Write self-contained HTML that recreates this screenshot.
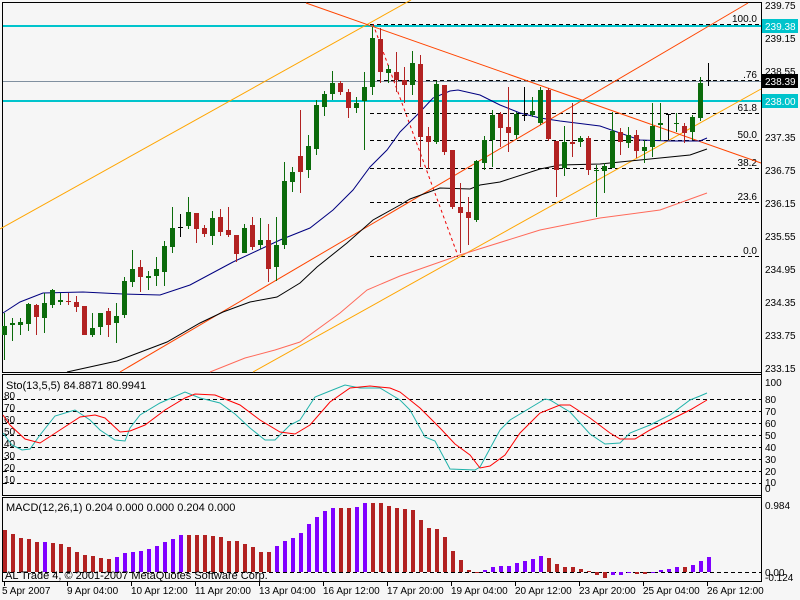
<!DOCTYPE html>
<html><head><meta charset="utf-8"><style>
html,body{margin:0;padding:0;background:#f6f6f6;width:800px;height:600px;overflow:hidden}
svg{display:block;font-family:"Liberation Sans",sans-serif;font-size:11px}
</style></head><body>
<svg id="s" width="800" height="600" viewBox="0 0 800 600" xmlns="http://www.w3.org/2000/svg">
<rect width="800" height="600" fill="#f6f6f6"/>
<rect x="2.5" y="2.5" width="759" height="370" fill="none" stroke="#000"/>
<rect x="2.5" y="374.5" width="759" height="121" fill="none" stroke="#000"/>
<rect x="2.5" y="497.5" width="759" height="84" fill="none" stroke="#000"/>
<line x1="3" y1="26" x2="761" y2="26" stroke="#00c4cc" stroke-width="2"/>
<line x1="3" y1="101" x2="761" y2="101" stroke="#00c4cc" stroke-width="2"/>
<line x1="3" y1="81.5" x2="761" y2="81.5" stroke="#8090a0"/>
<g stroke="#000" stroke-dasharray="4,3">
<line x1="370" y1="24.5" x2="761" y2="24.5"/><line x1="370" y1="80.5" x2="761" y2="80.5"/>
<line x1="370" y1="113.5" x2="761" y2="113.5"/><line x1="370" y1="140.5" x2="761" y2="140.5"/>
<line x1="370" y1="168.5" x2="761" y2="168.5"/><line x1="370" y1="202.5" x2="761" y2="202.5"/>
<line x1="370" y1="256.5" x2="761" y2="256.5"/>
</g>
<line x1="373" y1="24" x2="458" y2="256" stroke="#e00" stroke-dasharray="3,3"/>
<g font-size="10" text-anchor="end" fill="#000">
<text x="757" y="22">100.0</text><text x="757" y="78">.76</text><text x="757" y="111">61.8</text>
<text x="757" y="138">50.0</text><text x="757" y="166">38.2</text><text x="757" y="200">23.6</text><text x="757" y="254">0.0</text>
</g>
<g fill="none">
<line x1="0" y1="229" x2="411" y2="0" stroke="#ffa500"/>
<line x1="253" y1="372" x2="761" y2="89" stroke="#ffa500"/>
<line x1="120" y1="372" x2="748" y2="3" stroke="#ff4500"/>
<line x1="306" y1="3" x2="761" y2="163" stroke="#ff4500"/>
<polyline stroke="#000080" points="3,313 20,302 43,293 83,292 123,294 160,295 190,285 233,262 280,240 310,228 333,210 353,190 370,167 387,150 400,132 420,112 433,98 450,91 458,90 480,95 500,105 520,113 540,118 560,121 600,126 620,133 640,140 670,141 700,141 707,138"/>
<polyline stroke="#000" points="67,372 117,361 167,342 200,323 223,312 250,302 277,297 300,283 317,267 347,243 373,220 400,205 410,199 440,188 470,189 480,185 500,182 540,169 560,165 600,164 620,162 650,159 690,155 707,149"/>
<polyline stroke="#ff6a5a" points="210,372 245,358 275,350 300,342 340,313 367,290 400,276 420,269 460,255 540,230 600,218 660,210 707,193"/>
</g>
<g id="candles"></g>
<text x="6" y="389" fill="#000">Sto(13,5,5) 84.8871 80.9941</text>
<g stroke="#000" stroke-dasharray="4,3">
<line x1="3" y1="399.5" x2="761" y2="399.5"/><line x1="3" y1="411.5" x2="761" y2="411.5"/>
<line x1="3" y1="423.5" x2="761" y2="423.5"/><line x1="3" y1="435.5" x2="761" y2="435.5"/>
<line x1="3" y1="447.5" x2="761" y2="447.5"/><line x1="3" y1="459.5" x2="761" y2="459.5"/>
<line x1="3" y1="471.5" x2="761" y2="471.5"/><line x1="3" y1="483.5" x2="761" y2="483.5"/>
</g>
<g font-size="10" fill="#000">
<text x="4" y="399">80</text><text x="4" y="411">70</text><text x="4" y="423">60</text><text x="4" y="435">50</text>
<text x="4" y="447">40</text><text x="4" y="459">30</text><text x="4" y="471">20</text><text x="4" y="483">10</text>
</g>
<polyline fill="none" stroke="#20b2aa" points="3,433 12,445 22,450 30,449 40,435 55,416 75,410 90,420 100,430 115,440 125,441 130,428 140,415 160,403 185,392 200,398 220,403 235,414 250,428 265,440 275,440 290,425 300,420 315,397 330,391 345,385 360,388 380,388 400,400 410,410 425,437 435,441 450,469 475,470 480,467 500,430 510,420 530,408 545,399 550,400 570,412 590,434 605,444 620,443 630,433 650,425 670,415 690,400 700,396 707,393"/>
<polyline fill="none" stroke="#f00" points="3,415 10,425 25,439 40,443 60,430 80,417 95,415 105,418 120,432 130,431 145,425 165,410 185,398 195,394 215,395 240,405 260,420 280,432 295,434 310,425 330,402 350,388 370,386 390,388 400,392 420,408 440,428 455,444 470,455 480,468 490,466 505,455 520,433 540,413 560,405 570,405 590,418 610,433 620,439 635,439 650,430 670,420 690,410 707,400"/>
<text x="6" y="511" fill="#000">MACD(12,26,1) 0.204 0.000 0.000 0.204 0.000</text>
<line x1="3" y1="572.5" x2="761" y2="572.5" stroke="#000" stroke-dasharray="4,3"/>
<g id="bars"></g>
<text x="5" y="579" fill="#000">AL Trade 4, © 2001-2007 MetaQuotes Software Corp.</text>
<line x1="761.5" y1="2" x2="761.5" y2="582" stroke="#000"/>
<g font-size="10" fill="#000">
<text x="765" y="9">239.75</text><text x="765" y="42">239.15</text><text x="765" y="75">238.55</text>
<text x="765" y="141">237.35</text><text x="765" y="174">236.75</text><text x="765" y="207">236.15</text>
<text x="765" y="240">235.55</text><text x="765" y="273">234.95</text><text x="765" y="306">234.35</text>
<text x="765" y="339">233.75</text><text x="765" y="372">233.15</text>
</g>
<g font-size="10">
<rect x="762" y="19" width="36" height="14" fill="#00c4cc"/><text x="765" y="30" fill="#fff">239.38</text>
<rect x="762" y="74" width="36" height="14" fill="#000"/><text x="765" y="85" fill="#fff">238.39</text>
<rect x="762" y="94" width="36" height="14" fill="#00c4cc"/><text x="765" y="105" fill="#fff">238.00</text>
</g>
<g font-size="10" fill="#000">
<text x="765" y="386">100</text><text x="765" y="403">80</text><text x="765" y="415">70</text><text x="765" y="427">60</text>
<text x="765" y="439">50</text><text x="765" y="451">40</text><text x="765" y="463">30</text><text x="765" y="475">20</text>
<text x="765" y="486">10</text><text x="765" y="492">0</text>
<text x="765" y="509">0.984</text><text x="765" y="576">0.00</text><text x="765" y="581">-0.124</text>
</g>
<g id="ticks" stroke="#000"></g>
<g font-size="10" fill="#000">
<text x="2" y="594">5 Apr 2007</text><text x="67" y="594">9 Apr 04:00</text><text x="131" y="594">10 Apr 12:00</text>
<text x="195" y="594">11 Apr 20:00</text><text x="259" y="594">13 Apr 04:00</text><text x="323" y="594">16 Apr 12:00</text>
<text x="387" y="594">17 Apr 20:00</text><text x="451" y="594">19 Apr 04:00</text><text x="515" y="594">20 Apr 12:00</text>
<text x="579" y="594">23 Apr 20:00</text><text x="643" y="594">25 Apr 04:00</text><text x="707" y="594">26 Apr 12:00</text>
</g>
</svg>
<script>
var NS="http://www.w3.org/2000/svg";
function el(p,t,a){var e=document.createElementNS(NS,t);for(var k in a)e.setAttribute(k,a[k]);p.appendChild(e);return e;}
var C=[[326,335,313,360,'g'],[323,325,318,341,'g'],[322,325,318,335,'g'],[304,324,303,331,'g'],[305,317,304,335,'r'],[303,318,293,333,'g'],[290,305,289,308,'g'],[300,302,293,305,'g'],[301,302,293,305,'r'],[302,307,296,312,'r'],
[306,335,306,335,'r'],[328,335,313,337,'g'],[313,327,313,335,'g'],[311,325,308,337,'r'],[316,323,303,343,'g'],[281,315,277,318,'g'],[269,282,250,287,'g'],[267,277,260,292,'r'],[276,278,271,290,'g'],[269,276,257,286,'g'],
[246,272,241,286,'g'],[228,247,207,253,'g'],[227,228,214,237,'k'],[212,226,197,229,'g'],[213,229,213,243,'r'],[228,234,225,237,'r'],[218,236,211,245,'g'],[217,232,209,236,'r'],[230,235,207,237,'r'],[235,254,235,262,'r'],
[228,253,224,253,'g'],[225,247,217,250,'r'],[240,245,218,249,'g'],[240,269,224,282,'r'],[245,267,217,281,'g'],[181,245,162,249,'g'],[172,182,167,192,'g'],[156,172,110,193,'r'],[146,170,135,178,'g'],[105,149,100,155,'g'],
[94,107,91,116,'g'],[83,94,71,100,'g'],[83,92,81,95,'r'],[92,108,89,118,'r'],[103,108,97,113,'g'],[87,101,72,150,'g'],[38,87,27,95,'g'],[39,72,28,83,'r'],[69,73,65,83,'g'],[72,80,52,92,'r'],
[80,85,67,103,'r'],[63,85,51,95,'g'],[64,137,55,167,'r'],[136,142,127,169,'r'],[84,142,81,144,'g'],[85,152,85,155,'r'],[150,207,150,209,'r'],[207,213,183,253,'r'],[212,218,197,245,'r'],[161,220,160,222,'g'],
[140,163,136,170,'g'],[115,140,110,167,'g'],[114,128,112,147,'r'],[127,133,87,152,'r'],[114,135,112,139,'g'],[115,116,87,121,'k'],[111,115,97,117,'g'],[90,123,87,125,'g'],[90,139,88,141,'r'],[141,170,141,197,'r'],
[142,168,126,176,'g'],[142,144,103,157,'r'],[138,142,136,147,'g'],[138,170,136,175,'r'],[170,171,165,217,'g'],[166,171,163,193,'g'],[131,168,112,168,'g'],[132,142,128,155,'r'],[135,143,127,148,'g'],[135,151,130,158,'r'],
[147,151,140,163,'g'],[126,147,103,157,'g'],[123,125,103,141,'g'],[114,115,114,140,'k'],[123,124,113,132,'g'],[126,133,123,143,'r'],[117,132,115,140,'g'],[83,118,77,121,'g'],[80,81,63,86,'k']];
var col={g:'#0b6b0b',r:'#b22222',k:'#000'};
var cg=document.getElementById('candles');
C.forEach(function(c,i){var x=4+8*i,f=col[c[4]];
el(cg,'rect',{x:x,y:c[2],width:1,height:c[3]-c[2],fill:f});
if(c[4]=='k')el(cg,'rect',{x:x-2,y:c[0],width:5,height:1,fill:f});
else el(cg,'rect',{x:x-2,y:c[0],width:5,height:Math.max(1,c[1]-c[0]),fill:f});});
var T=[530,534,538,539,542,542,543,544,547,552,555,556,558,559,557,553,552,551,549,546,542,539,535,535,535,535,536,537,541,541,544,547,552,552,546,541,538,533,524,517,511,508,508,508,507,503,503,503,506,508,509,510,520,528,529,537,551,560,570,572,570,567,566,566,563,561,559,556,558,564,567,567,569,571,575,578,575,575,573,574,574,573,570,569,567,567,565,561,557];
var P={5:1,44:1,45:1,76:1,77:1,78:1,86:1,87:1,88:1};
[[14,22],[34,41],[60,67],[81,84]].forEach(function(r){for(var i=r[0];i<=r[1];i++)P[i]=1;});
var bg=document.getElementById('bars');
T.forEach(function(t,i){var x=3+8*i,y0=Math.min(t,572),y1=Math.max(t,572);
el(bg,'rect',{x:x,y:y0,width:4,height:Math.max(1,y1-y0),fill:P[i]?'#8000ff':'#b22222'});});
var tk=document.getElementById('ticks');
[4,67,131,195,259,323,387,451,515,579,643,707].forEach(function(x){el(tk,'line',{x1:x+0.5,y1:582,x2:x+0.5,y2:586});});
</script>
</body></html>
